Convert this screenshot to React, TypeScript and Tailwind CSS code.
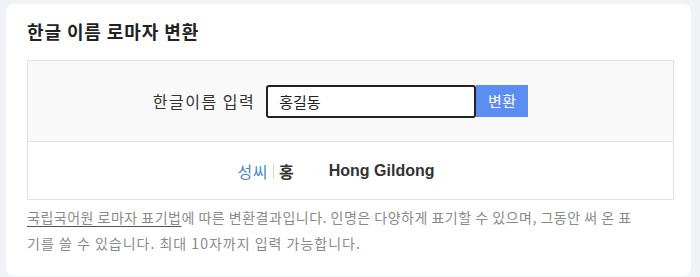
import React from "react";

const kr = { fontFamily: '"Noto Sans CJK KR", "Noto Sans", sans-serif' };

export default function App() {
  return (
    <div className="min-h-[277px] w-[700px] bg-[#f1f2f6] pl-[6px] pr-[9px] pt-[4px] pb-[2px]" style={kr}>
      <div className="rounded-[8px] bg-white pl-[21px] pr-[17px] pt-[11px] pb-[20px]">
        {/* Title */}
        <h1 className="text-[18px] font-bold leading-[32px] tracking-[0.9px] text-[#222]">한글 이름 로마자 변환</h1>

        {/* Converter box */}
        <div className="mt-[13px] border border-[#e2e2e2]">
          <div className="flex h-[80px] items-center justify-center bg-[#f9f9f9] pr-[20px]">
            <label className="text-[16px] tracking-[1.5px] text-[#333]">한글이름 입력</label>
            <input
              defaultValue="홍길동"
              className="ml-[11px] h-[33px] w-[210px] rounded-[3px] border-2 border-[#222] bg-white px-[11px] text-[15px] text-[#222] outline-none"
              style={kr}
            />
            <button className="h-[32px] w-[52px] bg-[#5b8ef0] text-[15px] tracking-[0.5px] text-white">변환</button>
          </div>
          <div className="flex h-[58px] items-center justify-center border-t border-[#e2e2e2] pr-[29px]">
            <span className="text-[16px] tracking-[0.5px] text-[#4a86c8]">성씨</span>
            <span className="mx-[5px] h-[16px] w-px bg-[#d8d8d8]" />
            <span className="text-[16px] font-bold text-[#333]">홍</span>
            <span
              className="ml-[35px] text-[16px] font-bold text-[#333]"
              style={{ fontFamily: '"Liberation Sans", Arial, sans-serif' }}
            >
              Hong Gildong
            </span>
          </div>
        </div>

        {/* Note */}
        <p className="mt-[4px] text-[14px] leading-[26px] tracking-[0.5px] text-[#8a8a8a]">
          <span className="block whitespace-nowrap">
            <span className="underline decoration-[#555] underline-offset-[3px]">국립국어원 로마자 표기법</span>에 따른
            변환결과입니다. 인명은 다양하게 표기할 수 있으며, 그동안 써 온 표
          </span>
          <span className="block whitespace-nowrap tracking-[1px]">기를 쓸 수 있습니다. 최대 10자까지 입력 가능합니다.</span>
        </p>
      </div>
    </div>
  );
}
